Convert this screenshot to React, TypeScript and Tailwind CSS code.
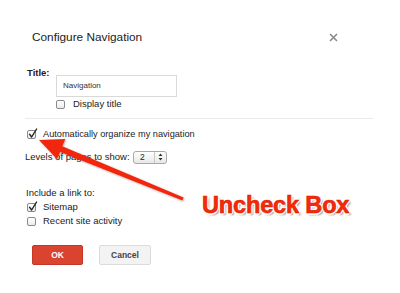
import React from "react";

function Box({ checked }: { checked?: boolean }) {
  return (
    <div className="relative w-[9px] h-[9px] shrink-0 rounded-[2px] border border-[#8a8a8a] bg-gradient-to-b from-white to-[#ececec]">
      {checked && (
        <svg className="absolute left-[0px] top-[-3px]" width="10" height="11" viewBox="0 0 10 11">
          <path d="M1.5 6.2 L3.6 9 L8.6 1" stroke="#222" strokeWidth="1.4" fill="none" strokeLinecap="round" strokeLinejoin="round" />
        </svg>
      )}
    </div>
  );
}

export default function App() {
  return (
    <div
      className="relative w-[400px] h-[293px] bg-white overflow-hidden text-[#222]"
      style={{ fontFamily: '"Liberation Sans", Arial, Helvetica, sans-serif' }}
    >
      {/* header */}
      <div className="flex items-center pt-[29px] pl-[32px] pr-[62px] h-[45px]">
        <div className="text-[11.8px] leading-[16px] text-[#222]">Configure Navigation</div>
        <svg className="ml-auto" width="9" height="9" viewBox="0 0 9 9">
          <path d="M1 1 L8 8 M8 1 L1 8" stroke="#8a8a8a" strokeWidth="1.6" />
        </svg>
      </div>

      {/* title section */}
      <div className="flex mt-[22px] pl-[27px]">
        <div className="w-[29px] text-[9.5px] leading-[12px] font-bold">Title:</div>
        <div className="flex flex-col mt-[8px]">
          <div className="w-[121px] h-[22px] border border-[#d9d9d9] flex items-center pl-[6px] text-[8px] text-[#333]">
            Navigation
          </div>
          <div className="flex items-center h-[10px] mt-[2px] gap-[8px]">
            <Box />
            <span className="text-[9.5px] leading-[10px]">Display title</span>
          </div>
        </div>
      </div>

      {/* divider */}
      <div className="mt-[9px] ml-[25px] w-[348px] border-t border-[#ebebeb]" />

      {/* auto row */}
      <div className="flex items-center h-[10px] mt-[10px] pl-[27px] gap-[7px]">
        <Box checked />
        <span className="text-[9.2px] leading-[10px]">Automatically organize my navigation</span>
      </div>

      {/* levels row */}
      <div className="flex items-center h-[14px] mt-[11px] pl-[25px]">
        <span className="text-[9.5px] leading-[10px] w-[108px]">Levels of pages to show:</span>
        <div className="flex items-center w-[34px] h-[13px] rounded-[3px] border border-[#a8a8a8] bg-gradient-to-b from-white to-[#e8e8e8]">
          <span className="text-[8.5px] leading-[10px] pl-[6px] w-[20px]">2</span>
          <div className="h-full border-l border-[#c8c8c8]" />
          <svg className="ml-[3px]" width="5" height="8" viewBox="0 0 5 8">
            <path d="M0.5 3 L2.5 0.5 L4.5 3 Z M0.5 5 L2.5 7.5 L4.5 5 Z" fill="#333" />
          </svg>
        </div>
      </div>

      {/* include */}
      <div className="mt-[23px] pl-[26px] text-[9.5px] leading-[12px]">Include a link to:</div>
      <div className="flex items-center h-[10px] mt-[3px] pl-[27px] gap-[7px]">
        <Box checked />
        <span className="text-[9.5px] leading-[10px]">Sitemap</span>
      </div>
      <div className="flex items-center h-[10px] mt-[4px] pl-[27px] gap-[7px]">
        <Box />
        <span className="text-[9.5px] leading-[10px]">Recent site activity</span>
      </div>

      {/* buttons */}
      <div className="flex mt-[19px] pl-[32px] gap-[16px]">
        <div className="w-[51px] h-[20px] rounded-[2px] bg-[#d9432f] border border-[#c53727] flex items-center justify-center text-white text-[8.5px] font-bold">
          OK
        </div>
        <div className="w-[52px] h-[20px] rounded-[2px] bg-[#f3f3f3] border border-[#dcdcdc] flex items-center justify-center text-[#444] text-[8.5px] font-bold">
          Cancel
        </div>
      </div>

      {/* annotation arrow */}
      <svg className="absolute left-0 top-0 pointer-events-none" width="400" height="293" viewBox="0 0 400 293">
        <defs>
          <filter id="sh" x="-10%" y="-10%" width="130%" height="130%">
            <feDropShadow dx="1" dy="1" stdDeviation="0.8" floodColor="#000" floodOpacity="0.3" />
          </filter>
        </defs>
        <polygon
          filter="url(#sh)"
          points="39,140 65.4,138.9 62.3,146.3 183.6,197.6 182.4,200.4 60.1,151.9 57,159.3"
          fill="#f2260c"
        />
      </svg>

      {/* annotation label */}
      <div
        className="absolute left-[202px] top-[192px] text-[23.6px] leading-[26px] font-bold text-[#f52a0a] tracking-[-0.2px]"
        style={{
          fontFamily: '"Liberation Sans", Arial, sans-serif',
          WebkitTextStroke: "0.6px #e01800",
          textShadow:
            "1px 1px 0 #fff, -1px -1px 0 #fff, 1px -1px 0 #fff, -1px 1px 0 #fff, 0 1.5px 0 #fff, 1.5px 0 0 #fff, 2px 2px 2px rgba(0,0,0,0.45)",
        }}
      >
        Uncheck Box
      </div>
    </div>
  );
}
